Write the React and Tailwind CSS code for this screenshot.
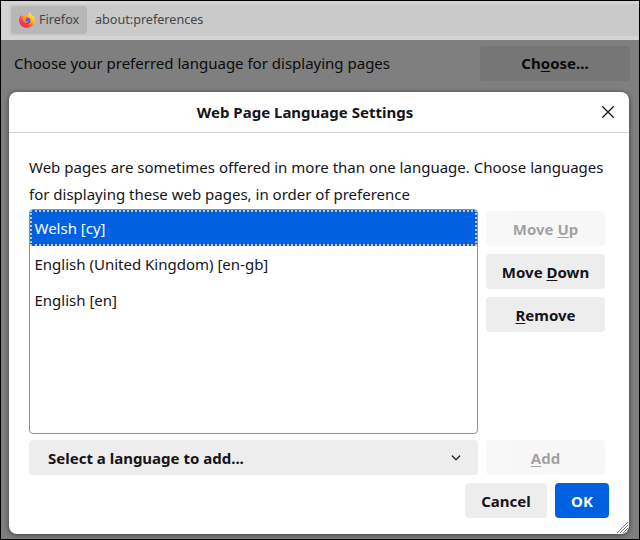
function Key({ children }) {
  return (
    <span className="underline decoration-1 underline-offset-2 [text-decoration-skip-ink:none]">
      {children}
    </span>
  );
}

function Button({ align = 'justify-center', className = '', disabled = false, children }) {
  return (
    <button
      disabled={disabled}
      className={`flex h-[35px] items-center rounded bg-[#ededed] pt-[1px] font-bold text-[#15141a] disabled:opacity-40 ${align} ${className}`}
    >
      {children}
    </button>
  );
}

function FirefoxLogo() {
  return (
    <svg className="size-4 shrink-0" viewBox="0 0 16 16">
      <defs>
        <linearGradient id="flame" x1="0.85" y1="0.1" x2="0.15" y2="0.9">
          <stop offset="0.1" stopColor="#ffe23e" />
          <stop offset="0.4" stopColor="#ffa51f" />
          <stop offset="0.65" stopColor="#ff5038" />
          <stop offset="1" stopColor="#e9206d" />
        </linearGradient>
        <linearGradient id="globe" x1="0.7" y1="0" x2="0.3" y2="1">
          <stop offset="0" stopColor="#a044dc" />
          <stop offset="1" stopColor="#4f46c8" />
        </linearGradient>
      </defs>
      <path
        d="M11 0C9.900.9 9.200 2 9.200 3.100 7.400 2.900 6 3.600 5.300 4.400 4.500 4.200 3.800 4.100 3.200 4.200 2.800 3.800 2.600 3.100 2.600 2.500 1.200 3.600.1 5.900.1 8.300c0 4.300 3.600 7.600 7.900 7.600s7.900-3.400 7.900-7.800c0-2.200-.8-3.700-1.700-4.700.1.700.1 1.100 0 1.600C13.300 2.700 11.400 2.200 11 0z"
        fill="url(#flame)"
      />
      <circle cx="8.300" cy="8.500" r="3.100" fill="url(#globe)" />
      <path
        d="M2.900 5.800c1.500-.9 2.700-.4 3.300.1l1.800.5c0 .7-1.500 1-1.700 1.600-.3 1 .9 1.600 2 1.400.8-.1 1.300-.4 1.800-.1-.7 1.300-2.500 1.800-3.900 1.100C4.400 9.500 4 7.500 2.900 5.800z"
        fill="#ff9620"
      />
    </svg>
  );
}

const languages = ['Welsh [cy]', 'English (United Kingdom) [en-gb]', 'English [en]'];

function LanguageDialog() {
  return (
    <section className="absolute top-[91px] left-2 flex h-[442px] w-[620px] flex-col rounded-lg bg-white text-[#15141a] shadow-[0_1px_4px_1px_rgba(0,0,0,0.4)]">
      <header className="relative flex h-[41px] shrink-0 items-center justify-center border-b border-[#cfcfd8] font-bold">
        <h1 className="pr-[28px]">Web Page Language Settings</h1>
        <svg className="absolute top-[14px] right-[15px] size-3" viewBox="0 0 12 12" stroke="#15141a" strokeWidth="1.300">
          <path d="M0.300 0.300 11.700 11.700M11.700 0.300 0.300 11.700" />
        </svg>
      </header>
      <div className="flex flex-col pr-6 pl-5">
        <p className="mt-[21px] leading-[27px] whitespace-nowrap">
          Web pages are sometimes offered in more than one language. Choose languages
          <br />
          for displaying these web pages, in order of preference
        </p>
        <div className="mt-[1px] flex gap-2">
          <ul className="h-[225px] w-[449px] overflow-hidden rounded border border-[#8f8f9d]">
            {languages.map((name, i) => (
              <li
                key={name}
                className={
                  i === 0
                    ? 'flex h-9 items-center border-2 border-dotted border-[#d1c88c] bg-[#0061e0] pl-[2.500px] text-[#fbfbfe]'
                    : 'flex h-9 items-center pl-[4.500px]'
                }
              >
                {name}
              </li>
            ))}
          </ul>
          <div className="flex w-[119px] flex-col gap-2 pt-[2px]">
            <Button disabled><span>Move <Key>U</Key>p</span></Button>
            <Button><span>Move <Key>D</Key>own</span></Button>
            <Button><span><Key>R</Key>emove</span></Button>
          </div>
        </div>
        <div className="mt-[6px] flex gap-2">
          <Button align="justify-between" className="w-[449px] pr-[17px] pl-[19px]">
            <span>Select a language to add...</span>
            <svg className="h-[6px] w-[10px]" viewBox="0 0 10 6" fill="none" stroke="#15141a" strokeWidth="1.200" strokeLinecap="round">
              <path d="M1.300 1l3.700 3.700L8.700 1" />
            </svg>
          </Button>
          <Button disabled className="w-[119px]"><span><Key>A</Key>dd</span></Button>
        </div>
      </div>
      <footer className="mt-2 flex justify-end gap-2 pr-5">
        <Button className="w-[82px]">Cancel</Button>
        <button className="flex h-[35px] w-[54px] items-center justify-center rounded bg-[#0061e0] pt-[1px] font-bold text-[#fbfbfe]">OK</button>
      </footer>
      <svg className="absolute right-[1px] bottom-[1px] size-[11px]" viewBox="0 0 11 11" stroke="#777" strokeWidth="1">
        <path d="M0 11 11 0M3 11l8-8M6 11l5-5M9 11l2-2" />
      </svg>
    </section>
  );
}

export default function App() {
  return (
    <div className="relative flex h-[540px] w-[640px] flex-col overflow-hidden border border-black bg-[#7f7f7f] font-['Noto_Sans','Open_Sans',sans-serif] text-[15px] text-[#0b0a0d]">
      <div className="flex h-[39px] shrink-0 bg-[#d5d4d5] pt-[3px] pb-1 pl-2">
        <div className="flex flex-1 items-center rounded-l bg-[#cacaca] pl-[2px] text-[12.600px] text-[#444347]">
          <div className="flex h-7 w-[76px] items-center gap-1 rounded-[3px] bg-[#b7b7b7] pl-2">
            <FirefoxLogo />
            <span>Firefox</span>
          </div>
          <span className="pl-2">about:preferences</span>
        </div>
      </div>
      <main className="flex justify-between pt-[6px] pr-[9px] pl-[13px]">
        <p className="leading-[35px]">Choose your preferred language for displaying pages</p>
        <button className="flex h-[35px] w-[150px] items-center justify-center rounded bg-[#767676] font-bold">
          <span>Ch<Key>o</Key>ose...</span>
        </button>
      </main>
      <LanguageDialog />
    </div>
  );
}
